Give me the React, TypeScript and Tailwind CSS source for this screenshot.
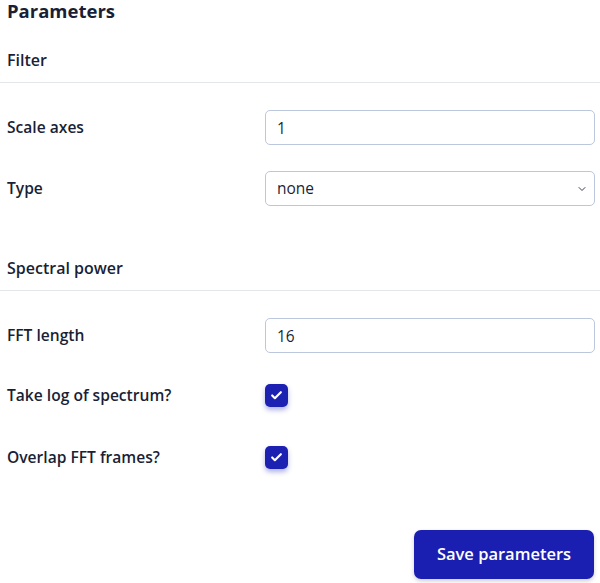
import React from 'react';
import { ChevronDown, Check } from 'lucide-react';

const font = { fontFamily: '"Open Sans", "Noto Sans", sans-serif' };

function SectionHeader({ title }: { title: string }) {
  return (
    <div className="border-b border-[#e4e6ea]">
      <h2 className="px-[7px] pb-[10px] text-[16px] leading-[24px] font-semibold text-[#1a1f36]">{title}</h2>
    </div>
  );
}

function Row({ label, children, className }: { label: string; children: React.ReactNode; className?: string }) {
  return (
    <div className={"flex items-center h-[35px] pl-[7px] pr-[5px] " + (className ?? '')}>
      <label className="w-[258px] shrink-0 text-[15.6px] font-semibold text-[#1a1f36]">{label}</label>
      <div className="flex-1 flex items-center">{children}</div>
    </div>
  );
}

function TextInput({ value }: { value: string }) {
  return (
    <input
      defaultValue={value}
      className="w-full h-[35px] rounded-[5px] border border-[#bcc6dc] px-[11px] text-[15.5px] text-[#1a1f36] outline-none"
      style={font}
    />
  );
}

function Checkbox() {
  return (
    <div className="w-[23px] h-[23px] rounded-[5px] bg-[#1c21b2] flex items-center justify-center shadow-[0_3px_5px_rgba(28,33,178,0.35)]">
      <Check size={13} strokeWidth={4} className="text-white" />
    </div>
  );
}

export default function App() {
  return (
    <div className="w-[600px] h-[583px] bg-white text-[#1a1f36]" style={font}>
      <h1 className="px-[7px] text-[18.5px] leading-[22px] font-bold">Parameters</h1>

      <div className="mt-[26px]">
        <SectionHeader title="Filter" />
      </div>
      <Row label="Scale axes" className="mt-[27px]">
        <TextInput value="1" />
      </Row>
      <Row label="Type" className="mt-[26px]">
        <div className="relative w-full h-[35px] rounded-[5px] border border-[#bcc6dc] flex items-center px-[11px]">
          <span className="text-[15.5px]">none</span>
          <ChevronDown size={12} strokeWidth={2} className="absolute right-[6px] top-[11px] text-[#3a3f52]" />
        </div>
      </Row>

      <div className="mt-[50px]">
        <SectionHeader title="Spectral power" />
      </div>
      <Row label="FFT length" className="mt-[27px]">
        <TextInput value="16" />
      </Row>
      <Row label="Take log of spectrum?" className="mt-[25px]">
        <Checkbox />
      </Row>
      <Row label="Overlap FFT frames?" className="mt-[27px]">
        <Checkbox />
      </Row>

      <div className="flex justify-end pr-[6px] mt-[55px]">
        <button className="w-[180px] h-[49px] rounded-[7px] bg-[#1a1fb2] text-white text-[16.5px] font-semibold shadow-[0_2px_4px_rgba(0,0,0,0.2)]">
          Save parameters
        </button>
      </div>
    </div>
  );
}
